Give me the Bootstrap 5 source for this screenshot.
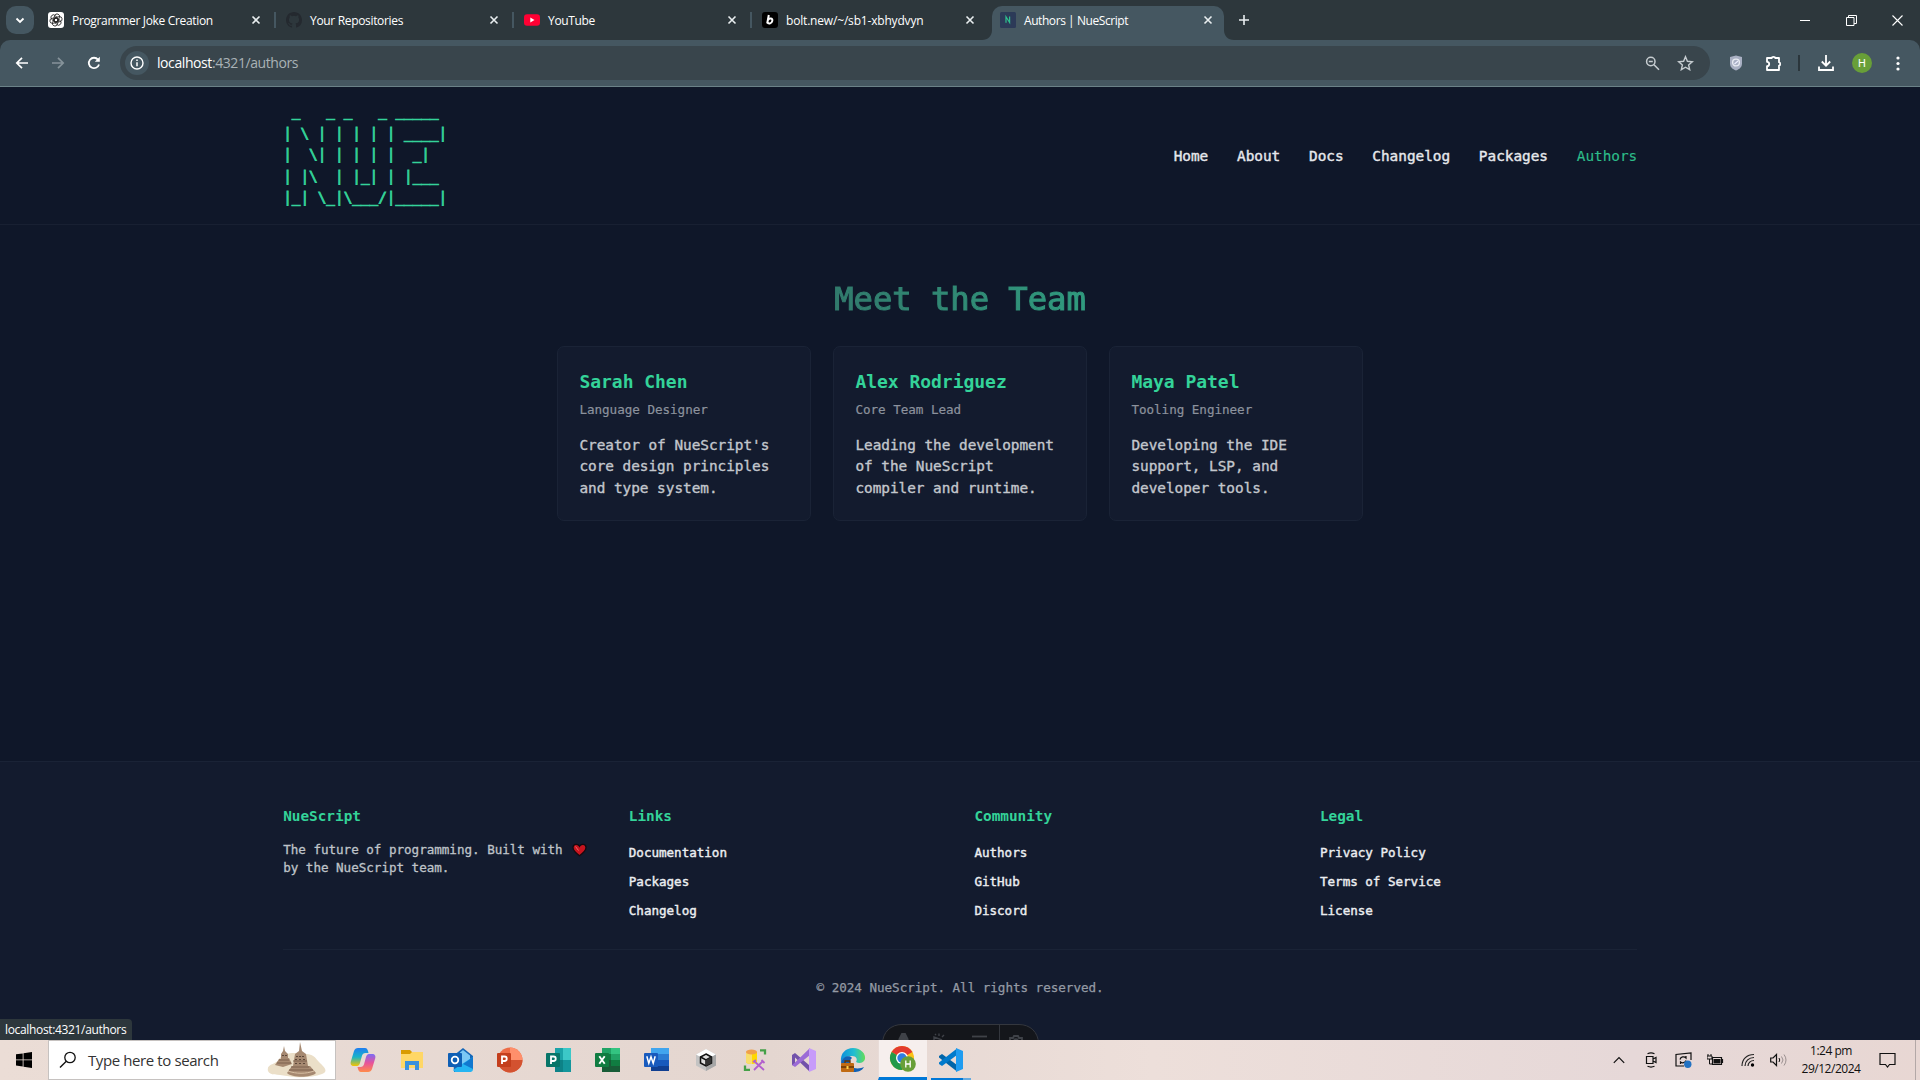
<!DOCTYPE html>
<html lang="en" data-bs-theme="dark">
<head>
<meta charset="utf-8">
<title>Authors | NueScript</title>
<link href="https://cdn.jsdelivr.net/npm/bootstrap@5.3.0/dist/css/bootstrap.min.css" rel="stylesheet">
<style>
  html, body { height: 1080px; overflow: hidden; }
  body { width: 1920px; background: #0f1729; font-family: "Open Sans", "Noto Sans", sans-serif; color: #fff; }
  svg { display: block; flex: none; }
  .strip { height: 40px; background: #2d373c; }
  .tab-search { width: 28px; height: 28px; margin: 6px 4px 6px 6px; border-radius: 10px; background: #455761; }
  .tab-item { width: 238px; height: 40px; padding: 0 12px 0 10px; font-size: 12px; letter-spacing: -.33px; position: relative; }
  .tab-item span { line-height: 16px; padding-top: 1px; }
  .tab-item.sep::after { content: ""; position: absolute; right: 0; top: 12px; width: 2px; height: 16px; background: #455761; }
  .tab-live { z-index: 0; }
  .tab-live::before { content: ""; position: absolute; z-index: -1; left: 2px; right: 4px; top: 6px; bottom: 0; background: #455761; border-radius: 10px 10px 0 0; }
  .tab-address { letter-spacing: -.18px; }
  .tab-current { letter-spacing: -.43px; }
  .flare { position: absolute; z-index: -1; bottom: 0; }
  .flare-l { left: -8px; } .flare-r { right: -6px; }
  .cell { display: flex; align-items: center; justify-content: center; flex: none; }
  .w36 { width: 36px; } .w46 { width: 46px; } .w33 { width: 33px; } .w32 { width: 32px; }
  .toolbar-row { height: 47px; background: #455761; border-bottom: 1px solid #6b8288; padding-left: 4px; }
  .corners { background: #2d373c; }
  .toolbar-wrap { border-radius: 10px 10px 0 0; }
  .omni { width: 1590px; height: 34px; margin-left: 8px; border-radius: 17px; background: #39454c; font-size: 14px; letter-spacing: -.42px; color: #a9b2b6; }
  .omni-url { margin-left: 8px; padding-bottom: 1px; }
  .info-dot { width: 24px; height: 24px; margin-left: 5px; border-radius: 50%; background: #455761; }
  .avatar { width: 20px; height: 20px; border-radius: 50%; background: #689f38; font: 11px Roboto, sans-serif; }
  .site { height: 953px; font-family: "DejaVu Sans Mono", monospace; letter-spacing: -.002em; font-size: 14.4px; line-height: 21.6px; }
  .site-head { height: 138px; padding: 14px 282.8px 0 283.2px; border-bottom: 1px solid #182032; }
  .ascii { margin: 0; height: 110px; overflow: hidden; font: inherit; color: #34d399; letter-spacing: -.002em; -webkit-text-stroke: .8px #34d399; }
  .site-nav { gap: 28.8px; margin-top: 44.5px; color: #e6e8ec; -webkit-text-stroke: .4px; }
  .site-nav .current { color: #2dbd8a; -webkit-text-stroke: .15px; }
  .site-main { height: 536px; padding-top: 55px; }
  .hero { font-size: 32.2px; line-height: 38.9px; margin: 0 0 27.4px; font-weight: 400; -webkit-text-stroke: 1.1px transparent; color: transparent; background: linear-gradient(90deg, #317a6c, #309a7e); -webkit-background-clip: text; background-clip: text; }
  .team { gap: 21.6px; }
  .person { width: 254.4px; height: 174.4px; padding: 20.6px 21.6px; border: 1px solid #1a2336; border-radius: 7px; background: #131b2e; color: #c3c7cd; -webkit-text-stroke: .35px; }
  .person h2 { font-size: 18px; line-height: 27px; margin: 0 0 6px; font-weight: 700; color: #34d399; -webkit-text-stroke: 0; }
  .role { font-size: 12.6px; line-height: 18.9px; margin: 0 0 15px; color: #8c929d; -webkit-text-stroke: .2px; }
  .site-foot { height: 279px; background: #131b2e; border-top: 1px solid #1a2336; padding: 43.6px 283px 0 283.2px; font-size: 12.6px; }
  .foot-grid { display: grid; grid-template-columns: repeat(4, 316.8px); column-gap: 28.8px; height: 144.800px; border-bottom: 1px solid #1a2336; }
  .foot-grid h3 { font-size: 14.4px; line-height: 21.6px; margin: 0 0 13.8px; font-weight: 700; color: #34d399; }
  .foot-grid p { line-height: 18px; color: #bfc3c9; -webkit-text-stroke: .3px; }
  .foot-grid ul { margin: 14.8px 0 0; }
  .foot-grid li { line-height: 21.6px; margin-bottom: 7.4px; color: #eceef1; -webkit-text-stroke: .4px; }
  .copy { padding-top: 28.4px; line-height: 18.9px; color: #949aa4; -webkit-text-stroke: .25px; }
  .heart { display: inline-block; vertical-align: -3px; margin-left: 2px; }
  .devbar { position: absolute; left: 881.500px; top: 1024px; }
  .status-tip { position: absolute; left: 0; top: 1019px; width: 132px; height: 21px; padding-left: 5px; border-radius: 0 4px 0 0; background: #2d373c; font-size: 12px; letter-spacing: -.34px; line-height: 21px; }
  .taskbar { height: 40px; background: linear-gradient(90deg, #ebddd6, #e4d6d0 40%, #eddfda 60%, #e6d8d8 85%, #e8d7d3); color: #111; }
  .find-box { width: 288px; height: 40px; background: #fff; border: 1px solid #c6c2c0; font-size: 15px; letter-spacing: -.4px; color: #333; }
  .app { width: 49px; height: 40px; display: flex; align-items: center; justify-content: center; flex: none; }
  .apps { margin-left: 2.500px; }
  .app-on { background: #f6efed; border-bottom: 3px solid #0078d7; border-left: 1px solid #e8dcd8; }
  .app-run { position: relative; }
  .app-run::after { content: ""; position: absolute; left: 4px; bottom: 0; width: 40px; height: 2px; background: linear-gradient(90deg, #0078d7 80%, #66abe0 80%); }
  .clock { width: 76px; font-size: 12px; line-height: 18px; letter-spacing: -.48px; text-align: center; }
  .bell { width: 46px; padding-right: 10px; }
  .peek { width: 5px; height: 40px; border-left: 1px solid #b3a8a7; }
</style>
<script src="https://cdn.jsdelivr.net/npm/bootstrap@5.3.0/dist/js/bootstrap.bundle.min.js"></script>
</head>
<body>
<svg class="position-absolute" width="0" height="0">
  <symbol id="x" viewBox="0 0 16 16"><path d="M4.500 4.500l7 7M11.500 4.500l-7 7" stroke="#e9eef0" stroke-width="1.600" fill="none"/></symbol>
</svg>

<div class="strip d-flex align-items-center">
  <div class="tab-search cell"><svg width="12" height="12" viewBox="0 0 12 12"><path d="M2.500 4.500L6 8l3.500-3.500" stroke="#fff" stroke-width="1.800" fill="none"/></svg></div>
  <div class="tab-item sep d-flex align-items-center gap-2">
    <svg width="16" height="16" viewBox="0 0 16 16"><rect width="16" height="16" rx="3" fill="#fff"/><g fill="none" stroke="#222" stroke-width=".8"><rect x="5.300" y="1.800" width="5" height="8" rx="2.500" transform="rotate(20 8 8)"/><rect x="5.300" y="1.800" width="5" height="8" rx="2.500" transform="rotate(80 8 8)"/><rect x="5.300" y="1.800" width="5" height="8" rx="2.500" transform="rotate(140 8 8)"/><rect x="5.300" y="1.800" width="5" height="8" rx="2.500" transform="rotate(200 8 8)"/><rect x="5.300" y="1.800" width="5" height="8" rx="2.500" transform="rotate(260 8 8)"/><rect x="5.300" y="1.800" width="5" height="8" rx="2.500" transform="rotate(320 8 8)"/></g></svg>
    <span class="flex-grow-1">Programmer Joke Creation</span><svg width="16" height="16"><use href="#x"/></svg>
  </div>
  <div class="tab-item sep d-flex align-items-center gap-2">
    <svg width="16" height="16" viewBox="0 0 16 16"><path fill="#24292f" d="M8 0C3.580 0 0 3.580 0 8c0 3.540 2.290 6.530 5.470 7.590.4.070.55-.17.55-.38v-1.490c-2.010.37-2.530-.49-2.690-.94-.09-.23-.48-.94-.82-1.130-.28-.15-.68-.52-.01-.53.63-.01 1.080.58 1.230.82.72 1.210 1.870.87 2.330.66.07-.52.28-.87.51-1.070-1.780-.2-3.640-.89-3.640-3.950 0-.87.31-1.590.82-2.150-.08-.2-.36-1.020.08-2.120 0 0 .67-.21 2.200.82a7.600 7.600 0 0 1 4 0c1.530-1.040 2.200-.82 2.200-.82.44 1.100.16 1.920.08 2.120.51.56.82 1.270.82 2.150 0 3.070-1.870 3.750-3.650 3.950.29.25.54.73.54 1.480v2.200c0 .21.15.46.55.38A8 8 0 0 0 16 8c0-4.420-3.580-8-8-8z"/></svg>
    <span class="flex-grow-1">Your Repositories</span><svg width="16" height="16"><use href="#x"/></svg>
  </div>
  <div class="tab-item sep d-flex align-items-center gap-2">
    <svg width="16" height="16" viewBox="0 0 16 16"><rect y="2.300" width="16" height="11.400" rx="3" fill="#f03"/><path d="M6.300 5.600v4.800L10.500 8z" fill="#fff"/></svg>
    <span class="flex-grow-1">YouTube</span><svg width="16" height="16"><use href="#x"/></svg>
  </div>
  <div class="tab-item d-flex align-items-center gap-2">
    <svg width="16" height="16" viewBox="0 0 16 16"><rect width="16" height="16" rx="3" fill="#000"/><path d="M6.800 3L5.200 11.500M6 8C7 5.800 11 5.700 10.300 8.900 9.700 12 6 12.300 5.400 10" fill="none" stroke="#fff" stroke-width="2"/></svg>
    <span class="flex-grow-1 tab-address">bolt.new/~/sb1-xbhydvyn</span><svg width="16" height="16"><use href="#x"/></svg>
  </div>
  <div class="tab-item tab-live d-flex align-items-center gap-2">
    <svg class="flare flare-l" width="10" height="10"><path d="M10 0v10H0C6 10 10 6 10 0z" fill="#455761"/></svg>
    <svg class="flare flare-r" width="10" height="10"><path d="M0 0v10h10C4 10 0 6 0 0z" fill="#455761"/></svg>
    <svg width="16" height="16" viewBox="0 0 16 16"><rect width="16" height="16" rx="1.500" fill="#2c3a58"/><path d="M6 10.800V4.800l3.600 5.700V4.500" fill="none" stroke="#2fc08f" stroke-width="1.200"/></svg>
    <span class="flex-grow-1 tab-current">Authors | NueScript</span><svg width="16" height="16"><use href="#x"/></svg>
  </div>
  <div class="cell w32"><svg width="12" height="12"><path d="M6 1v10M1 6h10" stroke="#e9eef0" stroke-width="1.600"/></svg></div>
  <div class="d-flex ms-auto">
    <div class="cell w46"><svg width="10" height="10"><path d="M0 5.500h10" stroke="#fff"/></svg></div>
    <div class="cell w46"><svg width="11" height="11"><path d="M.5 2.500h7.500v8H.5zM2.500 2.500v-2h8v8H8" fill="none" stroke="#fff"/></svg></div>
    <div class="cell w46"><svg width="11" height="11"><path d="M.5.5l10 10M10.500.5l-10 10" stroke="#fff" stroke-width="1.100"/></svg></div>
  </div>
</div>

<div class="corners"><div class="toolbar-row toolbar-wrap d-flex align-items-center">
  <div class="cell w36"><svg width="14" height="14"><path d="M13 7H2M7 1.800L1.800 7 7 12.200" fill="none" stroke="#fff" stroke-width="1.700"/></svg></div>
  <div class="cell w36"><svg width="14" height="14"><path d="M1 7h11M7 1.800L12.200 7 7 12.200" fill="none" stroke="#86939a" stroke-width="1.700"/></svg></div>
  <div class="cell w36"><svg width="14" height="14"><path d="M12 8.500A5.200 5.200 0 1 1 11 3.600" fill="none" stroke="#fff" stroke-width="1.800"/><path d="M12.800.8v5h-5z" fill="#fff"/></svg></div>
  <div class="omni d-flex align-items-center">
    <div class="info-dot cell"><svg width="14" height="14"><circle cx="7" cy="7" r="6" fill="none" stroke="#fff" stroke-width="1.400"/><path d="M7 6.300v4M7 3.600v1.500" stroke="#fff" stroke-width="1.500"/></svg></div>
    <span class="omni-url"><span class="text-white">localhost</span>:4321/authors</span>
    <div class="d-flex ms-auto me-2">
      <div class="cell w33"><svg width="15" height="15"><circle cx="5.800" cy="5.500" r="4.200" fill="none" stroke="#c6ccd0" stroke-width="1.500"/><path d="M3.800 5.500h4M9 8.700l5 5" stroke="#c6ccd0" stroke-width="1.600"/></svg></div>
      <div class="cell w33"><svg width="17" height="16"><path d="M8.500 1.700l1.900 4.600 4.900.4-3.700 3.200 1.100 4.800-4.200-2.500-4.200 2.500 1.100-4.800L1.700 6.700l4.900-.4z" fill="none" stroke="#c6ccd0" stroke-width="1.400"/></svg></div>
    </div>
  </div>
  <div class="cell w36 ms-2"><svg width="14" height="16"><path d="M7 .5l6 1.600v6.500c0 3.500-2.500 5.700-6 7-3.500-1.300-6-3.500-6-7V2.100z" fill="#a9b0c3"/><circle cx="7" cy="7.500" r="3.400" fill="none" stroke="#e8ebf2" stroke-width="1.400"/><path d="M5.500 9L9 6" stroke="#eef" stroke-width="1.200"/></svg></div>
  <div class="cell w36 ps-1"><svg width="18" height="18"><path d="M2 4h4.800a1.700 1.200 0 0 1 3.400 0H14v4.200a1.200 1.700 0 0 1 0 3.400V16H2v-3.800a2.200 2.200 0 0 0 0-4.400z" fill="none" stroke="#fff" stroke-width="1.800" stroke-linejoin="round"/></svg></div>
  <div class="cell" style="width:18px"><svg width="2" height="16"><path d="M1 0v16" stroke="#2b363c" stroke-width="2"/></svg></div>
  <div class="cell w36"><svg width="16" height="16"><path d="M8 0v10.500M3.800 6.500L8 10.700l4.200-4.200M1 11.500V15h14v-3.500" fill="none" stroke="#fff" stroke-width="1.800"/></svg></div>
  <div class="cell w36"><div class="avatar cell">H</div></div>
  <div class="cell w36"><svg width="4" height="15" fill="#fff"><circle cx="2" cy="2" r="1.600"/><circle cx="2" cy="7.500" r="1.600"/><circle cx="2" cy="13" r="1.600"/></svg></div>
</div></div>

<div class="site">
  <header class="site-head d-flex justify-content-between">
<pre class="ascii"> _   _ _   _ _____
| \ | | | | | ____|
|  \| | | | |  _|
| |\  | |_| | |___
|_| \_|\___/|_____|</pre>
    <nav class="site-nav d-flex align-items-start">
      <span>Home</span><span>About</span><span>Docs</span><span>Changelog</span><span>Packages</span><span class="current">Authors</span>
    </nav>
  </header>
  <main class="site-main d-flex flex-column align-items-center">
    <h1 class="hero">Meet the Team</h1>
    <div class="team d-flex">
      <article class="person"><h2>Sarah Chen</h2><p class="role">Language Designer</p><p class="mb-0">Creator of NueScript's core design principles and type system.</p></article>
      <article class="person"><h2>Alex Rodriguez</h2><p class="role">Core Team Lead</p><p class="mb-0">Leading the development of the NueScript compiler and runtime.</p></article>
      <article class="person"><h2>Maya Patel</h2><p class="role">Tooling Engineer</p><p class="mb-0">Developing the IDE support, LSP, and developer tools.</p></article>
    </div>
  </main>
  <footer class="site-foot">
    <div class="foot-grid">
      <div><h3>NueScript</h3><p class="mb-0">The future of programming. Built with <svg class="heart" width="15" height="14" viewBox="0 0 15 14"><path d="M7.500 12.800C3 9.500 1 7.300 1 4.600 1 1 5.800.2 7.500 3.300 9.200.2 14 1 14 4.600c0 2.700-2 4.900-6.500 8.200z" fill="#c8141e" stroke="#150a10" stroke-width="1.300"/><path d="M3.500 3.500l3 4" stroke="#ef6a6a" stroke-width="1"/></svg><br>by the NueScript team.</p></div>
      <div><h3>Links</h3><ul class="list-unstyled"><li>Documentation</li><li>Packages</li><li>Changelog</li></ul></div>
      <div><h3>Community</h3><ul class="list-unstyled"><li>Authors</li><li>GitHub</li><li>Discord</li></ul></div>
      <div><h3>Legal</h3><ul class="list-unstyled"><li>Privacy Policy</li><li>Terms of Service</li><li>License</li></ul></div>
    </div>
    <div class="copy text-center">© 2024 NueScript. All rights reserved.</div>
  </footer>
</div>

<svg class="devbar" width="157" height="16" viewBox="0 0 157 16"><path d="M.5 20C.5 8 9 .5 20 .5h117c11 0 19.500 7.500 19.500 19.500z" fill="#14161b" stroke="#34373e"/><path d="M117.500 1v16" stroke="#34373e"/><g stroke="#3f4248" fill="none" stroke-width="1.800"><path d="M17 16l3-6h3l3 6" fill="#3f4248"/><path d="M52 16v-3l8 3M54 11l-1-1M57 12v-2.500M60 13l2-2" stroke-width="1.400"/><path d="M90 12.500h15"/><path d="M128 16v-2h3l1-2h4l1 2h3v2M132 16c1-1 3-1 4 0"/></g></svg>
<div class="status-tip">localhost:4321/authors</div>

<div class="taskbar d-flex align-items-center">
  <div class="cell" style="width:48px"><svg width="16" height="16"><path d="M0 2.300L6.700 1.400v6.100H0zM7.500 1.300L16 0v7.500H7.500zM0 8.300h6.700v6.100L0 13.500zM7.500 8.300H16V16l-8.500-1.300z" fill="#000"/></svg></div>
  <div class="find-box d-flex align-items-center">
    <svg class="ms-2" width="31" height="20"><circle cx="13" cy="7.500" r="5.200" fill="none" stroke="#111" stroke-width="1.300"/><path d="M9.300 11.200L3 17.500" stroke="#111" stroke-width="1.400"/></svg>
    <span>Type here to search</span>
    <svg class="ms-auto me-2" width="60" height="38" viewBox="0 0 60 38"><path d="M1 30C-1 22 10 24 12 18 18 10 30 12 40 13c8 1 9 5 12 8 5 5 10 9 3 12-10 4-25 4-35 2C10 33 3 35 1 30z" fill="#ebdfc8"/><g fill="#a68971"><path d="M17 5l1 5 3 3v6h-7v-6l2-3z"/><path d="M12 18l10-1 3 6-9 3-8-2z"/><path d="M33 1l2 9 4 3 2 12H26l2-12 4-3z"/><path d="M25 25h18l6 7c-5 5-24 5-29 0z"/></g><path d="M12 19h10M10 22h14M26 20h14M24 26h18M22 29h24" stroke="#7d614f"/><path d="M30 15v1M33 15v1M36 15v1M29 18v1M33 18v1M37 18v1M29 22v1M33 22v1M37 22v1M16 14v1M19 14v1" stroke="#463328" stroke-width="1.500"/><path d="M21 30c8 3 18 3 26 0" stroke="#d7bfa3" fill="none"/></svg>
  </div>
  <div class="apps d-flex">
  <div class="app"><svg width="26" height="26" viewBox="0 0 26 26"><defs><linearGradient id="ca" x2="0" y2="1"><stop stop-color="#1f7df0"/><stop offset=".5" stop-color="#18b4c8"/><stop offset="1" stop-color="#f5c400"/></linearGradient><linearGradient id="cb" x2="0" y2="1"><stop stop-color="#7c6cf5"/><stop offset=".5" stop-color="#e8539a"/><stop offset="1" stop-color="#ff8b4a"/></linearGradient></defs><path d="M8 1h7c2 0 2.500 1.500 3 3l.5 2h-3c-2 0-3 1-3.600 3L10 16c-.7 2.500-2 3-4 3H4c-3 0-4-2-3-5L4 4c.7-2 2-3 4-3z" fill="url(#ca)"/><path d="M18 25h-7c-2 0-2.500-1.500-3-3l-.5-2h3c2 0 3-1 3.600-3L16 10c.7-2.500 2-3 4-3h2c3 0 4 2 3 5l-3 10c-.7 2-2 3-4 3z" fill="url(#cb)"/></svg></div>
  <div class="app"><svg width="22" height="22" viewBox="0 0 22 22"><path d="M0 1h9l2 2v6H0z" fill="#d99b00"/><path d="M0 5h9l2-2h11v16H0z" fill="#ffd766"/><path d="M4 12h14v9h-4v-5H8v5H4z" fill="#3a91dd"/></svg></div>
  <div class="app"><svg width="26" height="26" viewBox="0 0 26 26"><path d="M5 9L15 1l10 8v13l-3 3H6z" fill="#1567b8"/><path d="M15 3l7 5.500V14l-7 5-3-2V5.500z" fill="#7cc8f5"/><path d="M25 10v12c0 2-1 3-3 3H7l-2-2 12-8z" fill="#25b5f2"/><path d="M25 10v12L15 17z" fill="#1178cf"/><rect y="6" width="14" height="14" rx="1" fill="#0f5fb5"/><circle cx="7" cy="13" r="3.300" fill="none" stroke="#fff" stroke-width="1.800"/></svg></div>
  <div class="app"><svg width="26" height="26" viewBox="0 0 26 26"><circle cx="13" cy="13" r="12.500" fill="#ed6c47"/><path d="M13 .5A12.500 12.500 0 0 1 25.500 13H13z" fill="#ff8f6b"/><path d="M.5 13h25a12.500 12.500 0 0 1-25 0z" fill="#d35230"/><rect y="6" width="14" height="14" rx="1" fill="#c43e1c"/><path d="M5 17V9.500h2.500a2.200 2.200 0 0 1 0 4.500H5" fill="none" stroke="#fff" stroke-width="1.800"/></svg></div>
  <div class="app"><svg width="26" height="26" viewBox="0 0 26 26"><path d="M9 1h16v12H9z" fill="#3cc8c8"/><path d="M9 1h8v12H9z" fill="#1ba3a8"/><path d="M9 13h16v12H9z" fill="#0d8287"/><path d="M17 13h8v12h-8z" fill="#14969c"/><rect y="6" width="14" height="14" rx="1" fill="#077568"/><path d="M5 17V9.500h2.500a2.200 2.200 0 0 1 0 4.500H5" fill="none" stroke="#fff" stroke-width="1.800"/></svg></div>
  <div class="app"><svg width="26" height="26" viewBox="0 0 26 26"><path d="M7 1h18v24H7z" fill="#21a366"/><path d="M16 1h9v6h-9z" fill="#33c481"/><path d="M7 7h9v6H7zM16 13h9v6h-9z" fill="#107c41"/><path d="M7 13h9v6H7zM7 19h18v6H7z" fill="#185c37"/><rect y="6" width="14" height="14" rx="1" fill="#107c41"/><path d="M4.300 9.300l5.400 7.500M9.700 9.300l-5.400 7.500" stroke="#fff" stroke-width="1.900"/></svg></div>
  <div class="app"><svg width="26" height="26" viewBox="0 0 26 26"><path d="M7 1h18v6H7z" fill="#41a5ee"/><path d="M7 7h18v6H7z" fill="#2b7cd3"/><path d="M7 13h18v6H7z" fill="#185abd"/><path d="M7 19h18v5H7z" fill="#103f91"/><rect y="6" width="14" height="14" rx="1" fill="#185abd"/><path d="M2.800 9.300l2 7 2.200-6.500 2.200 6.500 2-7" fill="none" stroke="#fff" stroke-width="1.500"/></svg></div>
  <div class="app"><svg width="22" height="24" viewBox="0 0 22 24"><path d="M11 1l10 5.500v11L11 23 1 17.500v-11z" fill="#c3c3c3"/><path d="M11 1l10 5.500L11 12 1 6.500z" fill="#fff"/><path d="M11 12l10-5.500v11L11 23z" fill="#a7a7a7"/><path d="M11 6l5.500 3v6L11 18l-5.500-3V9z" fill="#ddd" stroke="#111" stroke-width="1.500"/><path d="M5.500 9L11 12l5.500-3M11 12v6" stroke="#111" stroke-width="1.500" fill="none"/><path d="M11 12l5.500-3v6L11 18z" fill="#333"/></svg></div>
  <div class="app"><svg width="24" height="24" viewBox="0 0 24 24"><path d="M3 4v10c0 2.500 11 2.500 11 0V4z" fill="#ffd800"/><path d="M3 4v10c0 1.300 3 2 6 2V4z" fill="#f8dd6c"/><ellipse cx="8.500" cy="4" rx="5.500" ry="2.500" fill="#f0a04b"/><path d="M17 2.300h5v4.200M2 17.500v4.300h5" fill="none" stroke="#44a047" stroke-width="2.300"/><path d="M11 13l10 9M20 13l-9 9" stroke="#b25fce" stroke-width="1.800"/><path d="M10 14l3-2M18.500 12l3 3" stroke="#b25fce" stroke-width="1.800"/></svg></div>
  <div class="app"><svg width="24" height="24" viewBox="0 0 24 24"><path d="M0 7l3-2 14 12v6L3 9.500V18l-3-1z" fill="#7252aa"/><path d="M0 17l3 2L18 7V0L3 14.500z" fill="#9b6bd6"/><path d="M17 0l7 3v18l-7 3z" fill="#c79bfa"/></svg></div>
  <div class="app"><svg width="26" height="26" viewBox="0 0 26 26"><defs><linearGradient id="ed"><stop stop-color="#0c8edb"/><stop offset=".55" stop-color="#22bed0"/><stop offset="1" stop-color="#63dd58"/></linearGradient></defs><path d="M1 15C0 6 6 1 13 1c8 0 13 6 12 11-1 4-6 5-9 3 2-3 0-6-4-6C6 9 2 12 1 15z" fill="url(#ed)"/><path d="M1 15C3 9 10 8 12 11c-3 2-3 8 2 10 4 1 8 0 10-1-2 4-6 5-10 5C6 25 2 21 1 15z" fill="#1261b5"/><rect x="1" y="16" width="13" height="9" rx="1" fill="#c06a12"/><path d="M5 16v-2h5v2M1 20h13" fill="none" stroke="#663403" stroke-width="1.300"/><rect x="6.500" y="19" width="2" height="3" fill="#ffd24a"/></svg></div>
  <div class="app app-on"><svg width="27" height="27" viewBox="0 0 27 27"><circle cx="13" cy="13" r="12" fill="#fbc116"/><path d="M13 13L2.600 7A12 12 0 0 1 23.400 7z" fill="#e33b2e"/><path d="M2.600 7A12 12 0 0 0 13 25l5-9-5-3z" fill="#229a4a"/><circle cx="13" cy="13" r="6" fill="#fff"/><circle cx="13" cy="13" r="4.700" fill="#2f7de1"/><circle cx="19" cy="19" r="7.800" fill="#689f38"/><path d="M16.800 15.500v7M21.200 15.500v7M16.800 19h4.400" stroke="#fff" stroke-width="1.300"/></svg></div>
  <div class="app app-run"><svg width="24" height="24" viewBox="0 0 24 24"><path d="M0 8l3-2L18 17v6.500L0 9.500z" fill="#0065a9"/><path d="M0 16l3 2L18 7V.5L0 14.500z" fill="#007acc"/><path d="M17 0l7 3v18l-7 3z" fill="#1f9cf0"/></svg></div>
  </div>
  <div class="d-flex align-items-center ms-auto">
    <div class="cell w32"><svg width="12" height="8"><path d="M.8 6.800L6 1.500l5.200 5.300" fill="none" stroke="#111" stroke-width="1.200"/></svg></div>
    <div class="cell w32"><svg width="12" height="16"><path d="M1.500 4.500h6.500v7H1.500zM8 7l3-1.500v5L8 9M2.500 1.700q3.500-1.500 7 0M2.500 14.300q3.500 1.500 7 0" fill="none" stroke="#111" stroke-width="1.200"/></svg></div>
    <div class="cell w32"><svg width="17" height="16"><path d="M16 8V1L1 2.500v11.500h8M5 7.500a3.500 3.500 0 0 1 6-1.500V4M11 8.500a3.500 3.500 0 0 1-5.500 1.500v2" fill="none" stroke="#111" stroke-width="1.200"/><circle cx="12.800" cy="12.200" r="3.700" fill="#2272c3"/></svg></div>
    <div class="cell w33"><svg width="17" height="12"><path d="M5.500 10.500h9v-7h-9zM15.500 5v4" fill="none" stroke="#111" stroke-width="1.200"/><path d="M6.500 5h7v4.500h-7z" fill="#111"/><path d="M1 0v2M4 0v2M0 2h5v3H0zM2.500 5v5h3" stroke="#111" fill="none"/></svg></div>
    <div class="cell w32"><svg width="14" height="14"><g fill="none" stroke="#222" stroke-width="1.200"><path d="M1 13C1 6 6 1.500 13 1.500M4 13c0-5 4-8.500 9-8.500M7 13c0-3 2.500-5.500 6-5.500"/></g><circle cx="11.500" cy="12" r="1.700"/></svg></div>
    <div class="cell" style="width:29px"><svg width="17" height="14"><path d="M.7 5H3l3.500-3.500v11L3 9H.7z" fill="none" stroke="#111" stroke-width="1.200"/><path d="M9 5q1.500 2 0 4" stroke="#111" fill="none"/><path d="M11.500 3.500q3 3.500 0 7M14 1.500q4 5.500 0 11" stroke="#9a8f8f" fill="none"/></svg></div>
    <div class="clock">1:24 pm<br>29/12/2024</div>
    <div class="cell bell"><svg width="17" height="17"><path d="M1 1.500h15v11h-5.500L8.500 15l-2-2.500H1z" fill="none" stroke="#111" stroke-width="1.200"/></svg></div>
    <div class="peek"></div>
  </div>
</div>
</body>
</html>
